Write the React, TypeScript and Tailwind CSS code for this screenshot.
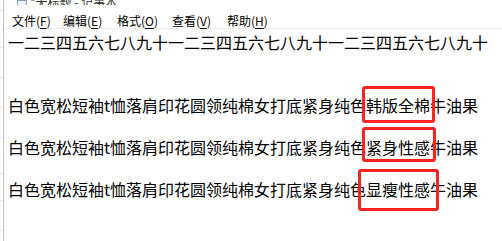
import React from "react";

const menus: { label: string; key: string; w: string }[] = [
  { label: "文件", key: "F", w: "w-[51px]" },
  { label: "编辑", key: "E", w: "w-[54px]" },
  { label: "格式", key: "O", w: "w-[55px]" },
  { label: "查看", key: "V", w: "w-[55px]" },
  { label: "帮助", key: "H", w: "w-[55px]" },
];

const lines = [
  "一二三四五六七八九十一二三四五六七八九十一二三四五六七八九十",
  "",
  "",
  "白色宽松短袖t恤落肩印花圆领纯棉女打底紧身纯色韩版全棉牛油果",
  "",
  "白色宽松短袖t恤落肩印花圆领纯棉女打底紧身纯色紧身性感牛油果",
  "",
  "白色宽松短袖t恤落肩印花圆领纯棉女打底紧身纯色显瘦性感牛油果",
];

export default function App() {
  return (
    <div
      className="relative w-[502px] h-[241px] overflow-hidden bg-white flex text-black"
      style={{ fontFamily: '"Noto Sans CJK SC", "Noto Sans", sans-serif' }}
    >
      {/* background window edge */}
      <div className="w-[3px] h-full flex flex-col">
        <div className="mt-[10px] h-px bg-[#e6e6e6]" />
        <div className="mt-[36px] h-px bg-[#e6e6e6]" />
        <div className="mt-[29px] h-px bg-[#e6e6e6]" />
        <div className="mt-[29px] h-px bg-[#e6e6e6]" />
        <div className="mt-[29px] h-px bg-[#e6e6e6]" />
        <div className="mt-[35px] h-px bg-[#e6e6e6]" />
        <div className="mt-[26px] h-px bg-[#e6e6e6]" />
        <div className="mt-[29px] h-px bg-[#e6e6e6]" />
      </div>
      <div className="w-px h-full bg-[#c4c4c4]" />

      <div className="flex-1 flex flex-col">
        {/* title bar remnant */}
        <div className="h-[5px] overflow-hidden flex items-end">
          <div className="flex items-end gap-[3px] pl-[13px] -mb-[3px]">
            <div className="w-[10px] h-[8px] border border-[#8aa0b8] bg-[#eef3f8]" />
            <span className="text-[12px] leading-[12px] text-[#333]">*无标题 - 记事本</span>
          </div>
        </div>

        {/* menu bar */}
        <div className="h-[24px] flex items-start pt-[9px] pl-[8px] border-b border-[#ececec] text-[12px] leading-[14px]">
          {menus.map((m) => (
            <div key={m.key} className={`${m.w} shrink-0 whitespace-nowrap`}>
              {m.label}(<span className="underline underline-offset-2">{m.key}</span>)
            </div>
          ))}
        </div>

        {/* editor */}
        <div className="pt-[3px] pl-[4px] text-[16px] leading-[21px] whitespace-pre">
          {lines.map((l, i) => (
            <div key={i} className="h-[21px]">
              {l}
            </div>
          ))}
        </div>
      </div>

      {/* annotation boxes */}
      <div className="absolute left-[362px] top-[86px] w-[73px] h-[37px] border-[3px] border-[#fa2424] rounded-[3px]" />
      <div className="absolute left-[362px] top-[127px] w-[74px] h-[35px] border-[3px] border-[#fa2424] rounded-[3px]" />
      <div className="absolute left-[358px] top-[169px] w-[81px] h-[42px] border-[3px] border-[#fa2424] rounded-[3px]" />
    </div>
  );
}
